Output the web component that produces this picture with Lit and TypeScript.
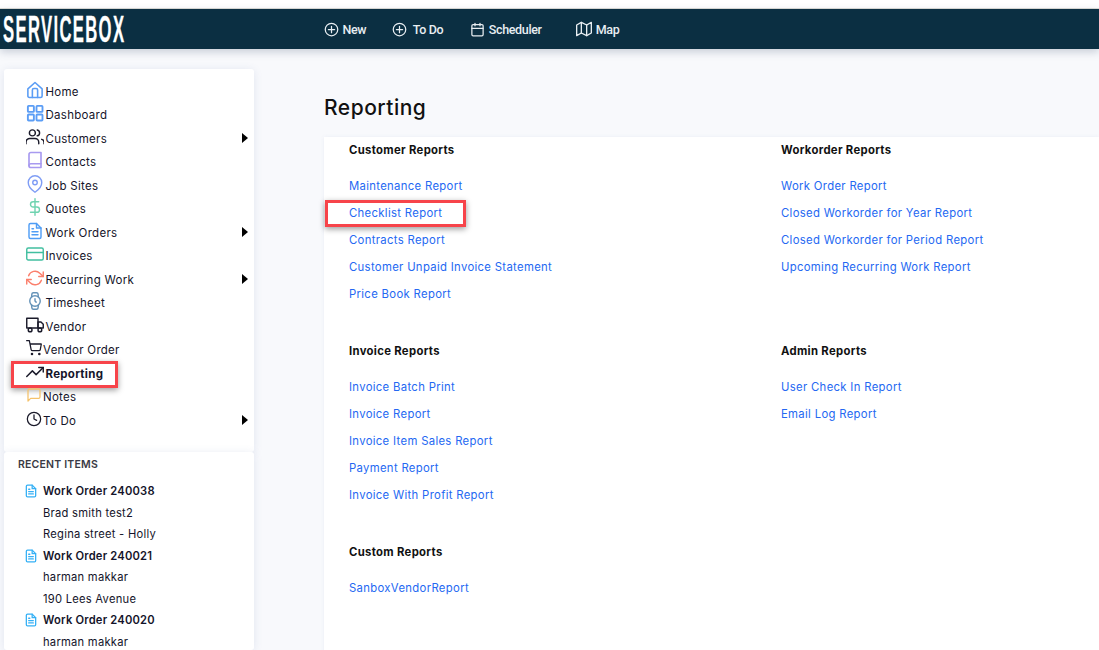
import { LitElement, html, css, svg } from "lit";
import { customElement } from "lit/decorators.js";

const ic = (color: string, body: unknown, size = 18, sw = 1.9, vb = "0 0 24 24") =>
  html`<svg class="ic" width=${size} height=${size} viewBox=${vb} fill="none" stroke=${color} stroke-width=${sw} stroke-linecap="round" stroke-linejoin="round">${body}</svg>`;

const doc = svg`<path d="M14 2H6a2 2 0 0 0-2 2v16a2 2 0 0 0 2 2h12a2 2 0 0 0 2-2V8z"/><path d="M14 2v6h6"/><path d="M8 13h8M8 17h8M8 9h2"/>`;

const NAV = [
  { t: "Home", i: ic("#5b9df5", svg`<path d="M2.5 10.5 12 2l9.5 8.5V20a2 2 0 0 1-2 2h-15a2 2 0 0 1-2-2z"/><path d="M8.5 22V12a2 2 0 0 1 2-2h3a2 2 0 0 1 2 2v10"/>`, 18, 2.1) },
  { t: "Dashboard", i: ic("#5b9df5", svg`<rect x="2.5" y="2.5" width="8" height="8" rx="1"/><rect x="14" y="2.500" width="8" height="8" rx="1"/><rect x="14" y="14" width="8" height="8" rx="1"/><rect x="2.5" y="14" width="8" height="8" rx="1"/>`, 18, 2.5) },
  { t: "Customers", arrow: true, i: ic("#1a1a2a", svg`<path d="M17 21v-2a5 5 0 0 0-5-5H5a5 5 0 0 0-5 5v2"/><circle cx="8.5" cy="6.5" r="4"/><path d="M24 21v-2a4 4 0 0 0-3-3.9"/><path d="M15 2.6a4 4 0 0 1 0 7.8"/>`) },
  { t: "Contacts", i: ic("#a89af0", svg`<path d="M4 19.5A2.5 2.5 0 0 1 6.5 17H20"/><path d="M6.5 2H20v20H6.5A2.5 2.5 0 0 1 4 19.5v-15A2.5 2.5 0 0 1 6.5 2z"/>`, 18, 2.2) },
  { t: "Job Sites", i: ic("#7f9df5", svg`<path d="M21 10c0 7-9 13-9 13s-9-6-9-13a9 9 0 0 1 18 0z"/><circle cx="12" cy="10" r="3"/>`) },
  { t: "Quotes", i: ic("#6fd3b0", svg`<path d="M12 1v22"/><path d="M17 5H9.500a3.500 3.500 0 0 0 0 7h5a3.500 3.500 0 0 1 0 7H6"/>`) },
  { t: "Work Orders", arrow: true, i: ic("#4f9df5", doc) },
  { t: "Invoices", i: ic("#42bfa0", svg`<rect x="1" y="4" width="22" height="16" rx="2"/><path d="M1 10h22"/>`) },
  { t: "Recurring Work", arrow: true, i: ic("#fb7f6c", svg`<path d="M23 4v6h-6"/><path d="M1 20v-6h6"/><path d="M3.500 9a9 9 0 0 1 14.900-3.400L23 10M1 14l4.600 4.400A9 9 0 0 0 20.500 15"/>`) },
  { t: "Timesheet", i: ic("#6593b8", svg`<circle cx="12" cy="12" r="7"/><path d="M12 9v3l1.500 1.500"/><path d="m16.500 17.400-.4 3.800a2 2 0 0 1-2 1.800H9.800a2 2 0 0 1-2-1.800l-.4-3.800m.1-10.800.3-3.800a2 2 0 0 1 2-1.800h4.300a2 2 0 0 1 2 1.800l.4 3.800"/>`) },
  { t: "Vendor", i: ic("#1a1a2a", svg`<rect x="1" y="3" width="15" height="13"/><path d="M16 8h4l3 3v5h-7z"/><circle cx="5.500" cy="18.500" r="2.500"/><circle cx="18.500" cy="18.500" r="2.500"/>`) },
  { t: "Vendor Order", narrow: true, i: ic("#1a1a2a", svg`<circle cx="9" cy="21" r="1"/><circle cx="20" cy="21" r="1"/><path d="M1 1h4l2.700 13.400a2 2 0 0 0 2 1.600h9.700a2 2 0 0 0 2-1.600L23 6H6"/>`) },
  { t: "Reporting", bold: true, mark: true, i: ic("#1a1a2a", svg`<path d="m23 6-9.500 9.500-5-5L1 18"/><path d="M17 6h6v6"/>`) },
  { t: "Notes", narrow: true, i: ic("#f5c26b", svg`<path d="M21 15a2 2 0 0 1-2 2H7l-4 4V5a2 2 0 0 1 2-2h14a2 2 0 0 1 2 2z"/>`) },
  { t: "To Do", narrow: true, arrow: true, i: ic("#1a1a2a", svg`<circle cx="12" cy="12" r="10"/><path d="M12 6v6l4 2"/>`) },
];

const RECENT = [
  ["Work Order 240038", "Brad smith test2", "Regina street - Holly"],
  ["Work Order 240021", "harman makkar", "190 Lees Avenue"],
  ["Work Order 240020", "harman makkar"],
];

const SECTIONS: { h: string; links: string[]; cls?: string }[] = [
  { h: "Customer Reports", links: ["Maintenance Report", "Checklist Report", "Contracts Report", "Customer Unpaid Invoice Statement", "Price Book Report"] },
  { h: "Invoice Reports", links: ["Invoice Batch Print", "Invoice Report", "Invoice Item Sales Report", "Payment Report", "Invoice With Profit Report"] },
  { h: "Custom Reports", links: ["SanboxVendorReport"] },
  { h: "Workorder Reports", cls: "r1", links: ["Work Order Report", "Closed Workorder for Year Report", "Closed Workorder for Period Report", "Upcoming Recurring Work Report"] },
  { h: "Admin Reports", cls: "r2", links: ["User Check In Report", "Email Log Report"] },
];

@customElement("app-root")
export class AppRoot extends LitElement {
  static styles = css`
    :host { display: block; height: 650px; overflow: hidden; background: #f8f9fc; font-family: Inter, "Open Sans", sans-serif; color: #14142a; }
    .top { height: 8px; background: #fff; border-bottom: 1px solid #dcdcd6; }
    header { height: 40px; background: #0b2f42; display: flex; align-items: center; box-shadow: 0 3px 8px rgba(60,80,110,.25); position: relative; }
    .logo { width: 324px; flex: none; overflow: hidden; height: 40px; padding-left: 3px; box-sizing: border-box; }
    .logo span { display: inline-block; font: 700 37px/41px "Liberation Sans", sans-serif; letter-spacing: 3px; color: #fff; transform: scaleX(.45); transform-origin: left center; -webkit-text-stroke: .3px #fff; white-space: nowrap; }
    .hn { display: flex; align-items: center; gap: 3.500px; color: #e8eef2; font: 500 12.500px Roboto, sans-serif; letter-spacing: -.35px; }
    .hn.todo { margin-left: 26px; gap: 5.500px; }
    .hn.sch { margin-left: 26.500px; gap: 4px; }
    .hn.map { margin-left: 34px; gap: 4px; }
    .body { display: flex; align-items: flex-start; height: 601px; padding: 20px 0 0 4px; box-sizing: border-box; }
    aside { width: 250px; flex: none; display: flex; flex-direction: column; }
    .card { background: #fff; box-shadow: 0 1px 8px rgba(90,110,170,.14); border-radius: 3px; }
    .nav { height: 383px; padding: 11px 6px 0 0; box-sizing: border-box; }
    .row { height: 23.500px; display: flex; align-items: center; padding-left: 22px; font-size: 11.500px; letter-spacing: .28px; position: relative; }
    .row .ic { flex: none; margin-right: 1.500px; transform: translateY(-2px); }
    .row.narrow .ic { width: 16px; margin-right: 1px; }
    .row.bold { font-weight: 700; }
    .arrow { position: absolute; right: 0; top: 6px; width: 0; height: 0; border-left: 6px solid #000; border-top: 5px solid transparent; border-bottom: 5px solid transparent; }
    .mark { position: absolute; box-sizing: border-box; border: 3px solid #f7444a; box-shadow: 0 2px 6px rgba(0,0,0,.4); pointer-events: none; }
    .mark.a { left: 7px; top: -1px; width: 107px; height: 27px; }
    .mark.b { left: -24px; top: 0; width: 141px; height: 27px; }
    .recent { height: 198px; padding: 6px 0 0 14px; box-sizing: border-box; }
    .rh { font-size: 10.500px; font-weight: 600; letter-spacing: .2px; color: #3a3a44; line-height: 14px; margin-bottom: 8.500px; }
    .ri { display: flex; align-items: center; height: 21.500px; padding-left: 25px; font-size: 11.200px; letter-spacing: .25px; position: relative; }
    .ri.t { font-weight: 600; padding-left: 6px; gap: 5px; letter-spacing: .2px; }
    main { flex: 1; padding-left: 70px; min-width: 0; }
    h1 { margin: 0; font-size: 21px; font-weight: 500; line-height: 26px; letter-spacing: .5px; padding: 26px 0 0 0; height: 42px; color: #111; }
    .panel { background: #fff; height: 520px; display: grid; grid-template-columns: 432px 1fr; grid-template-rows: repeat(3, auto); grid-auto-flow: column; align-content: start; padding-left: 25px; box-shadow: 0 0 4px rgba(90,110,170,.08); }
    .sec { margin-bottom: 30px; }
    .sec.r1 { grid-column: 2; grid-row: 1; }
    .sec.r2 { grid-column: 2; grid-row: 2; }
    .sec h3 { margin: 0 0 9px; height: 27px; line-height: 27px; font-size: 11.300px; font-weight: 700; letter-spacing: .33px; color: #111; }
    .lnk { height: 27px; line-height: 27px; font-size: 11.300px; letter-spacing: .33px; color: #2468f2; position: relative; white-space: nowrap; }
  `;

  render() {
    return html`
      <div class="top"></div>
      <header>
        <div class="logo"><span>SERVICEBOX</span></div>
        <div class="hn">${ic("#e8eef2", svg`<circle cx="12" cy="12" r="10"/><path d="M12 7v10M7 12h10"/>`, 15, 2)}New</div>
        <div class="hn todo">${ic("#e8eef2", svg`<circle cx="12" cy="12" r="10"/><path d="M12 7v10M7 12h10"/>`, 15, 2)}To Do</div>
        <div class="hn sch">${ic("#e8eef2", svg`<rect x="3" y="4" width="18" height="18" rx="2"/><path d="M16 2v4M8 2v4M3 10h18"/>`, 15, 2)}Scheduler</div>
        <div class="hn map">${ic("#e8eef2", svg`<path d="M1 6v16l7-4 8 4 7-4V2l-7 4-8-4z"/><path d="M8 2v16M16 6v16"/>`, 16, 2)}Map</div>
      </header>
      <div class="body">
        <aside>
          <div class="card nav">
            ${NAV.map(
              (n) => html`<div class="row ${n.narrow ? "narrow" : ""} ${n.bold ? "bold" : ""}">
                ${n.i}<span>${n.t}</span>
                ${n.arrow ? html`<i class="arrow"></i>` : ""}
                ${n.mark ? html`<i class="mark a"></i>` : ""}
              </div>`
            )}
          </div>
          <div class="card recent">
            <div class="rh">RECENT ITEMS</div>
            ${RECENT.map(
              (r) => html`
                <div class="ri t">${ic("#35b0f5", doc, 14, 2.2)}${r[0]}</div>
                ${r.slice(1).map((s) => html`<div class="ri">${s}</div>`)}
              `
            )}
          </div>
        </aside>
        <main>
          <h1>Reporting</h1>
          <div class="panel">
            ${SECTIONS.map(
              (s) => html`<div class="sec ${s.cls ?? ""}">
                <h3>${s.h}</h3>
                ${s.links.map(
                  (l) => html`<div class="lnk">${l}${l === "Checklist Report" ? html`<i class="mark b"></i>` : ""}</div>`
                )}
              </div>`
            )}
          </div>
        </main>
      </div>
    `;
  }
}
